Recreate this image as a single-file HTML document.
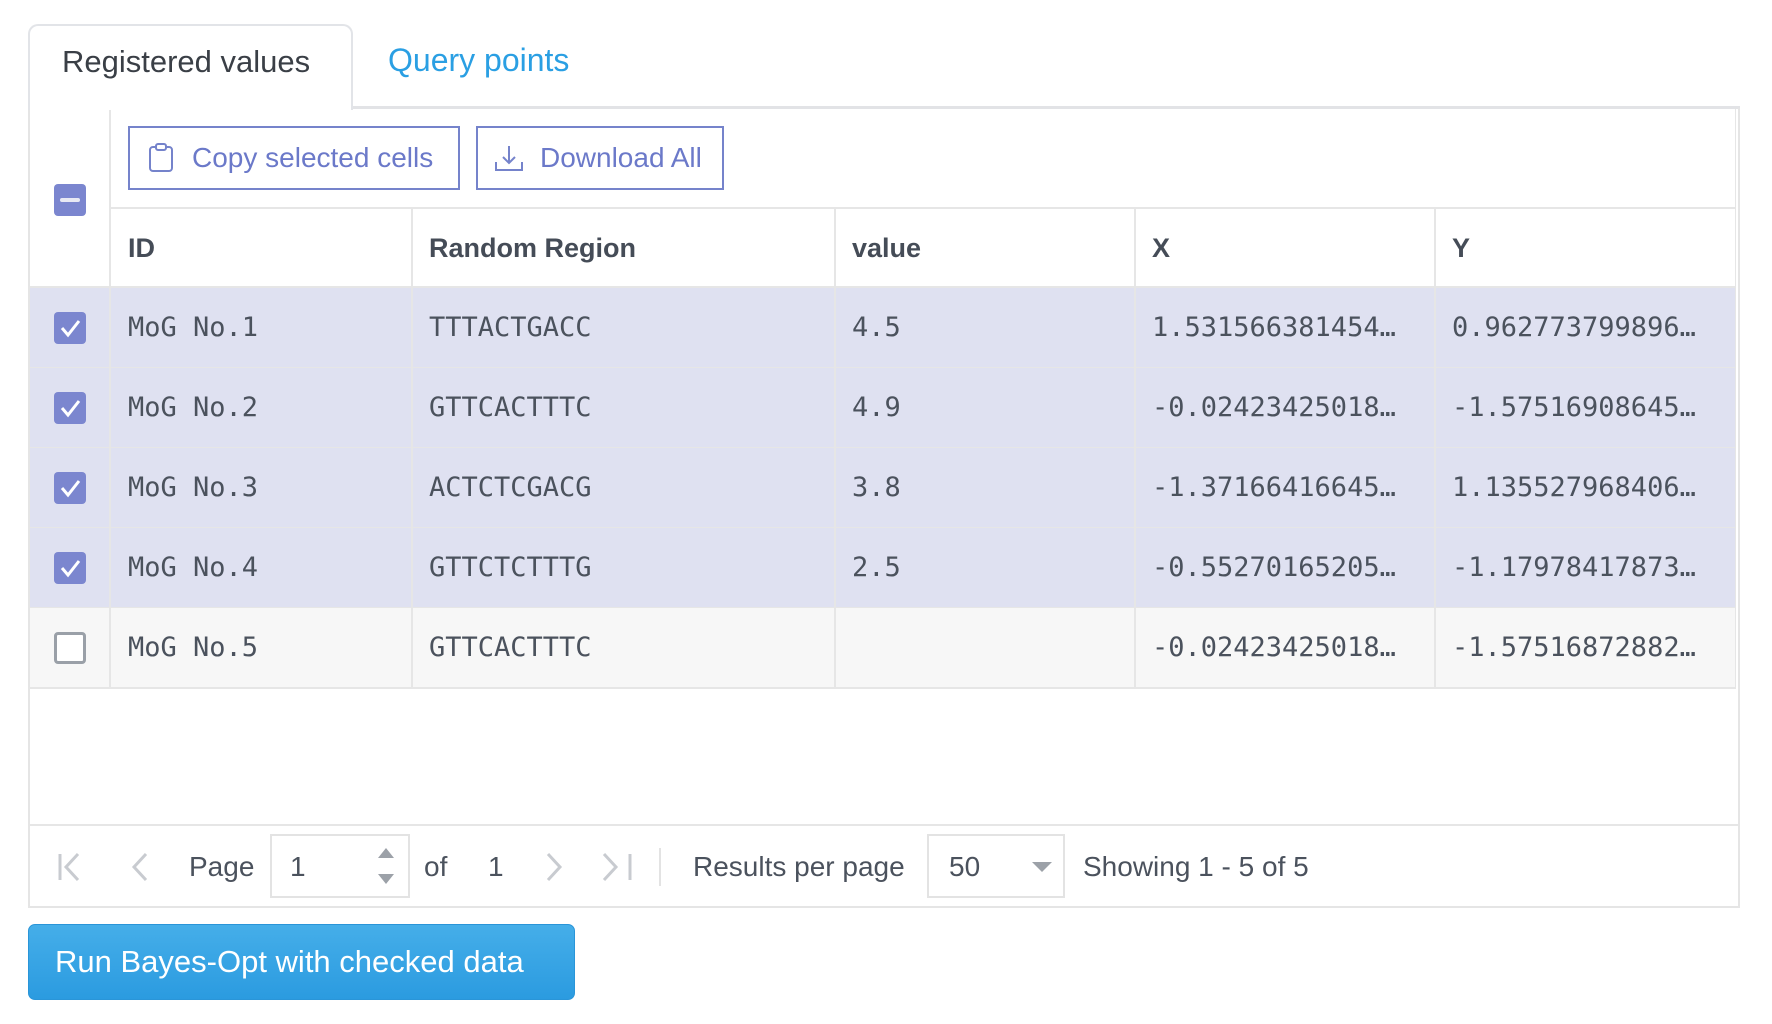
<!DOCTYPE html>
<html><head><meta charset="utf-8"><style>
*{box-sizing:border-box;margin:0;padding:0}
body{width:1772px;height:1024px;background:#fff;position:relative;overflow:hidden;font-family:"Liberation Sans",Helvetica,Arial,sans-serif;color:#4b525d}
.a{position:absolute}
.tab{left:28px;top:24px;width:325px;height:86px;border:2px solid #e2e4e8;border-bottom:none;border-radius:10px 10px 0 0;background:#fff;z-index:2}
.tabline{left:28px;top:106px;width:1712px;height:3px;background:#e2e3e6}
.panel{left:28px;top:108px;width:1712px;height:800px;border:2px solid #e5e5e5;border-top:none}
.btn{height:64px;border:2px solid #7583cb;color:#6b79c9;font-size:28px;display:flex;align-items:center}
.hl{background:#e6e6e6}
.cell{position:absolute;font-family:"DejaVu Sans Mono","Liberation Mono",monospace;font-size:27px;color:#4b525d;line-height:80px;white-space:nowrap}
.hd{position:absolute;font-weight:bold;font-size:27px;color:#454c57;top:209px;line-height:78px}
.cb{position:absolute;left:54px;width:32px;height:32px;border-radius:4px;background:#7b86cf}
.pg{position:absolute;top:844px;font-size:28px;line-height:46px;color:#4b525d}
</style></head><body>
<div class="a tabline"></div>
<div class="a tab"><div class="a" style="left:32px;top:18px;font-size:31px;color:#3a3f46">Registered values</div></div>
<div class="a" style="left:388px;top:42px;font-size:32px;color:#2a9fe3">Query points</div>
<div class="a panel"></div>
<!-- table backgrounds -->
<div class="a" style="left:30px;top:288px;width:1706px;height:320px;background:#dfe1f1"></div>
<div class="a" style="left:30px;top:608px;width:1706px;height:80px;background:#f7f7f7"></div>
<!-- grid lines -->
<div class="a hl" style="left:109px;top:109px;width:2px;height:579px"></div>
<div class="a hl" style="left:110px;top:207px;width:1626px;height:2px"></div>
<div class="a hl" style="left:30px;top:286px;width:1706px;height:2px"></div>
<div class="a hl" style="left:30px;top:367px;width:1706px;height:1px"></div>
<div class="a hl" style="left:30px;top:447px;width:1706px;height:1px"></div>
<div class="a hl" style="left:30px;top:527px;width:1706px;height:1px"></div>
<div class="a hl" style="left:30px;top:607px;width:1706px;height:1px"></div>
<div class="a hl" style="left:30px;top:687px;width:1706px;height:2px"></div>
<div class="a hl" style="left:1735px;top:109px;width:1px;height:579px"></div>
<div class="a hl" style="left:411px;top:209px;width:2px;height:479px"></div>
<div class="a hl" style="left:834px;top:209px;width:2px;height:479px"></div>
<div class="a hl" style="left:1134px;top:209px;width:2px;height:479px"></div>
<div class="a hl" style="left:1434px;top:209px;width:2px;height:479px"></div>
<div class="a hl" style="left:30px;top:824px;width:1708px;height:2px"></div>
<!-- toolbar -->
<div class="a btn" style="left:128px;top:126px;width:332px">
<svg width="26" height="30" viewBox="0 0 26 30" style="margin-left:18px;margin-right:18px"><rect x="2" y="4" width="22" height="24" rx="3" fill="none" stroke="#7583cb" stroke-width="2"/><rect x="8" y="1" width="10" height="6" rx="2" fill="#fff" stroke="#7583cb" stroke-width="2"/></svg>Copy selected cells</div>
<div class="a btn" style="left:476px;top:126px;width:248px">
<svg width="30" height="28" viewBox="0 0 30 28" style="margin-left:16px;margin-right:16px"><path d="M15 2v17M9 13l6 6 6-6M2 18v8h26v-8" fill="none" stroke="#7583cb" stroke-width="2"/></svg>Download All</div>
<div class="cb" style="top:184px"><div class="a" style="left:6px;top:14px;width:20px;height:4px;background:#e8e9f3;border-radius:2px"></div></div>
<!-- headers -->
<div class="hd" style="left:128px">ID</div>
<div class="hd" style="left:429px">Random Region</div>
<div class="hd" style="left:852px">value</div>
<div class="hd" style="left:1152px">X</div>
<div class="hd" style="left:1452px">Y</div>
<!-- rows -->
<div class="cb" style="top:312px"><svg class="a" width="32" height="32"><path d="M8 16l6 7 11-14" fill="none" stroke="#fff" stroke-width="3"/></svg></div>
<div class="cb" style="top:392px"><svg class="a" width="32" height="32"><path d="M8 16l6 7 11-14" fill="none" stroke="#fff" stroke-width="3"/></svg></div>
<div class="cb" style="top:472px"><svg class="a" width="32" height="32"><path d="M8 16l6 7 11-14" fill="none" stroke="#fff" stroke-width="3"/></svg></div>
<div class="cb" style="top:552px"><svg class="a" width="32" height="32"><path d="M8 16l6 7 11-14" fill="none" stroke="#fff" stroke-width="3"/></svg></div>
<div class="cb" style="top:632px;background:#fff;border:3px solid #9aa0a8"></div>

<div class="cell" style="left:128px;top:288px">MoG No.1</div><div class="cell" style="left:429px;top:288px">TTTACTGACC</div><div class="cell" style="left:852px;top:288px">4.5</div><div class="cell" style="left:1152px;top:288px">1.531566381454…</div><div class="cell" style="left:1452px;top:288px">0.962773799896…</div>
<div class="cell" style="left:128px;top:368px">MoG No.2</div><div class="cell" style="left:429px;top:368px">GTTCACTTTC</div><div class="cell" style="left:852px;top:368px">4.9</div><div class="cell" style="left:1152px;top:368px">-0.02423425018…</div><div class="cell" style="left:1452px;top:368px">-1.57516908645…</div>
<div class="cell" style="left:128px;top:448px">MoG No.3</div><div class="cell" style="left:429px;top:448px">ACTCTCGACG</div><div class="cell" style="left:852px;top:448px">3.8</div><div class="cell" style="left:1152px;top:448px">-1.37166416645…</div><div class="cell" style="left:1452px;top:448px">1.135527968406…</div>
<div class="cell" style="left:128px;top:528px">MoG No.4</div><div class="cell" style="left:429px;top:528px">GTTCTCTTTG</div><div class="cell" style="left:852px;top:528px">2.5</div><div class="cell" style="left:1152px;top:528px">-0.55270165205…</div><div class="cell" style="left:1452px;top:528px">-1.17978417873…</div>
<div class="cell" style="left:128px;top:608px">MoG No.5</div><div class="cell" style="left:429px;top:608px">GTTCACTTTC</div><div class="cell" style="left:1152px;top:608px">-0.02423425018…</div><div class="cell" style="left:1452px;top:608px">-1.57516872882…</div>
<!-- pagination -->
<svg class="a" style="left:56px;top:850px" width="40" height="34"><path d="M4 4v26M22 4L10 17l12 13" fill="none" stroke="#c8cbd0" stroke-width="3"/></svg>
<svg class="a" style="left:128px;top:850px" width="30" height="34"><path d="M18 4L6 17l12 13" fill="none" stroke="#c8cbd0" stroke-width="3"/></svg>
<div class="pg" style="left:189px">Page</div>
<div class="a" style="left:270px;top:834px;width:140px;height:64px;border:2px solid #e3e3e3"></div>
<div class="pg" style="left:290px">1</div>
<svg class="a" style="left:374px;top:844px" width="24" height="44"><path d="M4 14L12 4l8 10z M4 30l8 10 8-10z" fill="#9ca1a8"/></svg>
<div class="pg" style="left:424px">of</div>
<div class="pg" style="left:488px">1</div>
<svg class="a" style="left:540px;top:850px" width="30" height="34"><path d="M8 4l12 13L8 30" fill="none" stroke="#c8cbd0" stroke-width="3"/></svg>
<svg class="a" style="left:598px;top:850px" width="40" height="34"><path d="M6 4l12 13L6 30M32 4v26" fill="none" stroke="#c8cbd0" stroke-width="3"/></svg>
<div class="a" style="left:659px;top:848px;width:2px;height:38px;background:#e3e3e3"></div>
<div class="pg" style="left:693px">Results per page</div>
<div class="a" style="left:927px;top:834px;width:138px;height:64px;border:2px solid #e3e3e3"></div>
<div class="pg" style="left:949px">50</div>
<svg class="a" style="left:1030px;top:860px" width="24" height="14"><path d="M2 2h20L12 12z" fill="#9ca1a8"/></svg>
<div class="pg" style="left:1083px">Showing 1 - 5 of 5</div>
<!-- run button -->
<div class="a" style="left:28px;top:924px;width:547px;height:76px;border-radius:7px;background:linear-gradient(#45aee9,#2b9be0);border:1px solid #2a95d8;color:#fff;font-size:31px;line-height:74px;padding-left:26px">Run Bayes-Opt with checked data</div>
</body></html>
